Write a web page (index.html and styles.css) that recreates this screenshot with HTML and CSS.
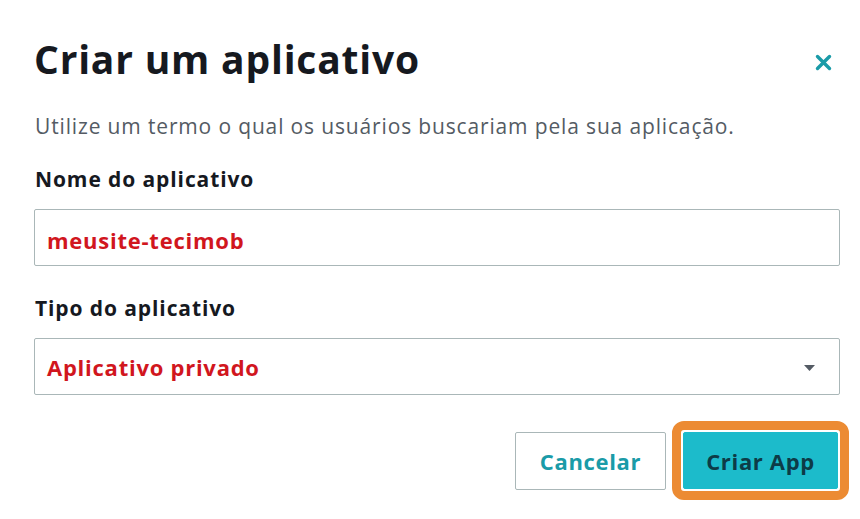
FILE: index.html
```html
<!DOCTYPE html>
<html lang="pt">
<head>
<meta charset="utf-8">
<link rel="stylesheet" href="styles.css">
</head>
<body>
<div class="modal">
  <div class="header">
    <h1 class="title">Criar um aplicativo</h1>
    <button class="close" aria-label="Fechar">
      <svg width="17" height="17" viewBox="0 0 17 17"><path d="M2.5 2.5 L14.5 14.5 M14.5 2.5 L2.5 14.5" stroke="#1a9ba8" stroke-width="3.4" stroke-linecap="round"/></svg>
    </button>
  </div>
  <p class="desc">Utilize um termo o qual os usuários buscariam pela sua aplicação.</p>
  <div class="field">
    <label class="label">Nome do aplicativo</label>
    <div class="input">meusite-tecimob</div>
  </div>
  <div class="field second">
    <label class="label">Tipo do aplicativo</label>
    <div class="input select">
      <span>Aplicativo privado</span>
      <svg class="caret" width="11" height="6" viewBox="0 0 11 6"><path d="M0 0 H11 L5.5 6 Z" fill="#545b64"/></svg>
    </div>
  </div>
  <div class="actions">
    <button class="btn cancel">Cancelar</button>
    <div class="ring"><button class="btn primary">Criar App</button></div>
  </div>
</div>
</body>
</html>
```
FILE: styles.css
```css
* { box-sizing: border-box; }
html, body { margin: 0; padding: 0; background: #fff; }
body { font-family: "Open Sans", "Noto Sans", sans-serif; color: #16191f; }
.modal { padding: 35px 20px 0 34px; width: 860px; }
.header { display: flex; justify-content: space-between; align-items: flex-start; padding-right: 8px; }
.title { margin: 0; font-size: 39px; font-weight: 700; line-height: 48px; letter-spacing: 0.8px; }
.close { border: 0; background: none; padding: 0; margin-top: 19px; display: flex; }
.desc { margin: 29px 0 0 1px; font-size: 21px; line-height: 28px; color: #545b64; letter-spacing: 0.85px; }
.field { margin-top: 25px; }
.field.second { margin-top: 28px; }
.label { display: block; font-size: 21px; font-weight: 700; line-height: 28px; margin-left: 1px; letter-spacing: 0.9px; }
.input { margin-top: 16px; height: 57px; border: 1px solid #aab7b8; border-radius: 2px; padding: 4px 24px 0 12px; display: flex; align-items: center; font-size: 22px; font-weight: 700; color: #d1161e; letter-spacing: 0.75px; width: 806px; }
.select { justify-content: space-between; padding-top: 0; }
.caret { margin-top: 2px; }
.actions { display: flex; justify-content: flex-end; align-items: center; gap: 6px; margin-top: 26px; margin-right: -9px; }
.btn { font-family: inherit; font-size: 22px; font-weight: 700; border-radius: 2px; cursor: pointer; letter-spacing: 0.65px; padding: 0; }
.cancel { width: 151px; height: 58px; background: #fff; border: 1px solid #aab7b8; color: #1a9ba8; }
.ring { border: 9px solid #ec8b33; border-radius: 12px; padding: 2px; background: #fff; }
.primary { display: block; width: 155px; height: 57px; background: #1cbbcb; border: 1px solid #1cbbcb; color: #0d3b47; }
```
